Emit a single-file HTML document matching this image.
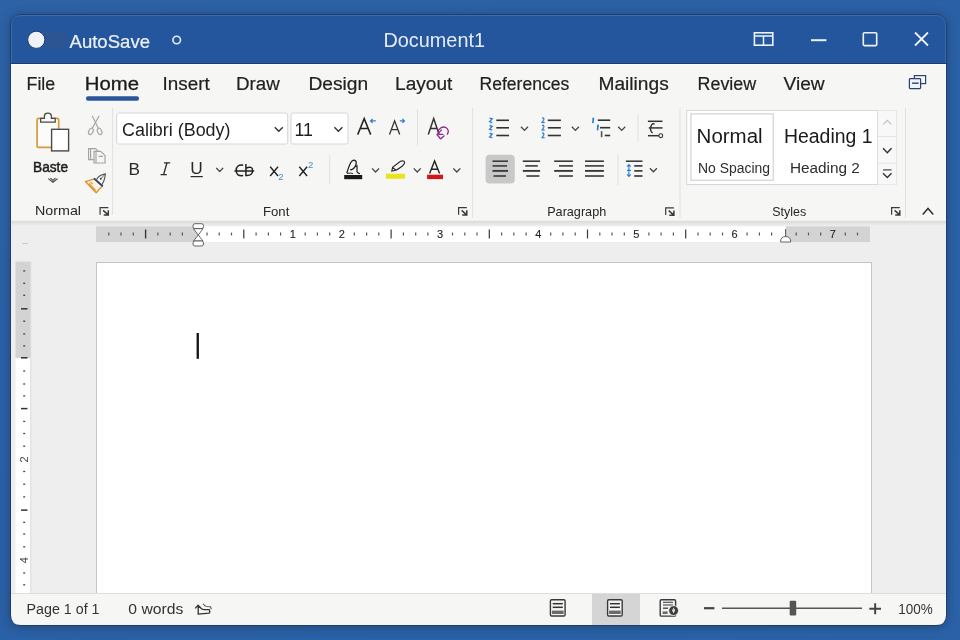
<!DOCTYPE html>
<html><head><meta charset="utf-8"><title>Document1 - Word</title>
<style>html,body{margin:0;padding:0;width:960px;height:640px;overflow:hidden;background:#2b62a6}svg{display:block;will-change:transform}text{font-family:'Liberation Sans', sans-serif}</style>
</head><body>
<svg width="960" height="640" viewBox="0 0 960 640" font-family="'Liberation Sans', sans-serif">
<defs><linearGradient id="bg" x1="0" y1="0" x2="1" y2="1"><stop offset="0" stop-color="#2d62a6"/><stop offset="0.5" stop-color="#2a60a5"/><stop offset="1" stop-color="#2b62a7"/></linearGradient><clipPath id="win"><rect x="11" y="15" width="935" height="610" rx="10"/></clipPath><filter id="sh" x="-5%" y="-5%" width="110%" height="110%"><feGaussianBlur stdDeviation="4"/></filter></defs>
<rect x="0" y="0" width="960" height="640" fill="url(#bg)"/>
<rect x="9" y="14" width="939" height="614" fill="#1b355c" rx="12" opacity="0.5" filter="url(#sh)"/>
<g clip-path="url(#win)">
<rect x="11" y="15" width="935" height="49" fill="#23569c"/>
<rect x="11" y="63.5" width="935" height="158" fill="#f6f6f4"/>
<line x1="11" y1="63.5" x2="946" y2="63.5" stroke="#1c3d72" stroke-width="1"/>
<line x1="11" y1="64.5" x2="946" y2="64.5" stroke="#fbfbfb" stroke-width="1"/>
<rect x="11" y="221" width="935" height="372" fill="#eeeeee"/>
<linearGradient id="rsh" x1="0" y1="0" x2="0" y2="1"><stop offset="0" stop-color="#dadada"/><stop offset="1" stop-color="#eeeeee"/></linearGradient>
<rect x="11" y="220.8" width="935" height="5" fill="url(#rsh)"/>
</g>
<rect x="10.5" y="14.5" width="936" height="611" rx="10.5" fill="none" stroke="#1d3660" stroke-width="1" opacity="0.7"/>
<path d="M11.5,63 V25 Q11.5,15.5 21,15.5 H936 Q945.5,15.5 945.5,25 V63" fill="none" stroke="#4a7cbc" stroke-width="1" opacity="0.6"/>
<rect x="38" y="31.5" width="30" height="16" fill="#34568c" rx="8" opacity="0.55"/>
<circle cx="36.3" cy="39.8" r="8.6" fill="#eef1f6" stroke="#1a3a6c" stroke-width="1"/>
<text x="69.5" y="48.3" font-size="19" fill="#eef2f8" textLength="80.5" lengthAdjust="spacingAndGlyphs" stroke="#eef2f8" stroke-width="0.2">AutoSave</text>
<circle cx="176.7" cy="40" r="3.8" fill="none" stroke="#e8eef6" stroke-width="1.6"/>
<text x="383.5" y="47" font-size="19.5" fill="#e6ecf5" textLength="101.5" lengthAdjust="spacingAndGlyphs">Document1</text>
<rect x="754.4" y="32.8" width="18.4" height="12.4" fill="none" stroke="#eef2f8" stroke-width="1.6"/>
<line x1="754.4" y1="36" x2="772.8" y2="36" stroke="#eef2f8" stroke-width="1.5"/>
<line x1="763.5" y1="36" x2="763.5" y2="45.2" stroke="#eef2f8" stroke-width="1.5"/>
<line x1="811" y1="40.2" x2="826.4" y2="40.2" stroke="#eef2f8" stroke-width="2"/>
<rect x="863.3" y="32.8" width="13.4" height="12.8" fill="none" stroke="#eef2f8" stroke-width="1.6" rx="1"/>
<path d="M915,32.5 L928,45.5 M928,32.5 L915,45.5" stroke="#eef2f8" stroke-width="1.8"/>
<text x="26.5" y="89.5" font-size="18.8" fill="#222" textLength="28.7" lengthAdjust="spacingAndGlyphs" stroke="#222" stroke-width="0.2">File</text>
<text x="84.8" y="89.5" font-size="18.8" fill="#1a1a1a" textLength="54.2" lengthAdjust="spacingAndGlyphs" stroke="#1a1a1a" stroke-width="0.3">Home</text>
<text x="162.5" y="89.5" font-size="18.8" fill="#222" textLength="47.2" lengthAdjust="spacingAndGlyphs" stroke="#222" stroke-width="0.2">Insert</text>
<text x="236.1" y="89.5" font-size="18.8" fill="#222" textLength="43.7" lengthAdjust="spacingAndGlyphs" stroke="#222" stroke-width="0.2">Draw</text>
<text x="308.5" y="89.5" font-size="18.8" fill="#222" textLength="59.7" lengthAdjust="spacingAndGlyphs" stroke="#222" stroke-width="0.2">Design</text>
<text x="395.1" y="89.5" font-size="18.8" fill="#222" textLength="57.2" lengthAdjust="spacingAndGlyphs" stroke="#222" stroke-width="0.2">Layout</text>
<text x="479.5" y="89.5" font-size="18.8" fill="#222" textLength="89.8" lengthAdjust="spacingAndGlyphs" stroke="#222" stroke-width="0.2">References</text>
<text x="598.5" y="89.5" font-size="18.8" fill="#222" textLength="70.2" lengthAdjust="spacingAndGlyphs" stroke="#222" stroke-width="0.2">Mailings</text>
<text x="697.5" y="89.5" font-size="18.8" fill="#222" textLength="58.7" lengthAdjust="spacingAndGlyphs" stroke="#222" stroke-width="0.2">Review</text>
<text x="783.5" y="89.5" font-size="18.8" fill="#222" textLength="41.2" lengthAdjust="spacingAndGlyphs" stroke="#222" stroke-width="0.2">View</text>
<rect x="86" y="96.2" width="53" height="4.6" fill="#2b579a" rx="2"/>
<rect x="914.4" y="75.6" width="11.2" height="8" fill="#f5f7fb" stroke="#2c426e" stroke-width="1.2"/>
<rect x="909.4" y="78.6" width="11.2" height="10" rx="0.8" fill="#eef2f9" stroke="#2c426e" stroke-width="1.2"/>
<line x1="912.1" y1="83.2" x2="918.7" y2="83.2" stroke="#2c426e" stroke-width="1.4"/>
<rect x="37.1" y="118.4" width="21.6" height="29" fill="#fbfbfa" stroke="#d59a3c" stroke-width="1.7" rx="1.5"/>
<path d="M40.6,122.2 V118.4 H44.4 V116 Q44.6,113.2 47.8,113.2 Q51.2,113.2 51.4,116 V118.4 H55.2 V122.2 Z" fill="#f8f8f8" stroke="#4a4a4a" stroke-width="1.3"/>
<rect x="51.6" y="129.3" width="17" height="21.6" fill="#ffffff" stroke="#4a4a4a" stroke-width="1.4"/>
<text x="33" y="172" font-size="14.6" fill="#1e1e1e" textLength="35" lengthAdjust="spacingAndGlyphs" stroke="#1e1e1e" stroke-width="0.5">Baste</text>
<path d="M48.3,178.6 L53,182.2 L57.6,178.6 M50.5,178.2 L53,180.3 L55.5,178.2" fill="none" stroke="#444" stroke-width="1.1"/>
<g fill="none" stroke="#a6a6a6" stroke-width="1.15"><ellipse cx="90.9" cy="131.4" rx="2.1" ry="3.3" transform="rotate(25 90.9 131.4)"/><ellipse cx="99.6" cy="131.4" rx="2.1" ry="3.3" transform="rotate(-25 99.6 131.4)"/><path d="M92.2,128.4 L99.2,115.8 M98.4,128.4 L92.2,115.8"/></g>
<g fill="#f6f6f4" stroke="#a3a3a3" stroke-width="1.15"><path d="M88.6,148.6 H95.4 L99.4,152.2 V159.6 H88.6 Z"/><path d="M90.6,149 V159.4"/><path d="M94,151.4 H100.6 L105,155.4 V163 H94 Z"/><path d="M96,151.8 V162.8 M98.6,156.3 H103"/></g>
<path d="M94.2,178.8 Q89.5,180.6 85.4,181.6 L96.2,192.8 Q98.8,189.2 102.4,186.2 Z" fill="#fdf2e0" stroke="#e0902a" stroke-width="1.4" stroke-linejoin="round"/>
<path d="M88.9,183.4 L95.7,190.3 M90.6,182.2 L92.6,184.1" fill="none" stroke="#e0902a" stroke-width="1.1"/>
<path d="M96.6,179.6 Q98.2,175.2 105.4,173.9 Q104.6,181.2 101.6,185" fill="#f6f6f4" stroke="#555" stroke-width="1.1"/>
<path d="M105.2,174.1 L100.9,178.7" stroke="#555" stroke-width="0.9"/>
<circle cx="100.8" cy="178.8" r="1" fill="#444"/>
<path d="M94,178.4 L102.8,186.2" stroke="#2a4878" stroke-width="1.9"/>
<text x="35" y="215.4" font-size="13.6" fill="#262626" textLength="46" lengthAdjust="spacingAndGlyphs">Normal</text>
<path d="M100.1,214.8 V207.6 H108.3" fill="none" stroke="#3a3a3a" stroke-width="1.2"/>
<path d="M103.1,210.4 L107.7,214.4 M108.3,210.2 V215 H103.7" fill="none" stroke="#3a3a3a" stroke-width="1.5"/>
<line x1="112.5" y1="108" x2="112.5" y2="215" stroke="#e2e2e2" stroke-width="1"/>
<rect x="116.7" y="113" width="171" height="31" fill="#ffffff" stroke="#d6d6d6" stroke-width="1" rx="2"/>
<text x="122" y="136" font-size="18" fill="#1e1e1e" textLength="108.5" lengthAdjust="spacingAndGlyphs">Calibri (Body)</text>
<path d="M274.8,127.30000000000001 L278.8,131.3 L282.8,127.30000000000001" fill="none" stroke="#333" stroke-width="1.4"/>
<rect x="291" y="113" width="57" height="31" fill="#ffffff" stroke="#d6d6d6" stroke-width="1" rx="2"/>
<text x="294.5" y="135.7" font-size="18" fill="#1e1e1e" textLength="18.5" lengthAdjust="spacingAndGlyphs">11</text>
<path d="M334.4,127.30000000000001 L338.4,131.3 L342.4,127.30000000000001" fill="none" stroke="#333" stroke-width="1.4"/>
<path d="M357.7,134.6 L364.2,118.6 L370.7,134.6 M360.1,128.4 H368.3" fill="none" stroke="#222" stroke-width="1.5"/>
<path d="M375.8,120.9 H370.6 M372.6,118.9 L370.6,120.9 L372.6,122.9" fill="none" stroke="#2e7bd6" stroke-width="1.3"/>
<path d="M389.5,134.6 L394.6,120.8 L399.7,134.6 M391.4,129.6 H397.8" fill="none" stroke="#333" stroke-width="1.3"/>
<path d="M399.9,120.9 H404.4 M402.4,118.9 L404.4,120.9 L402.4,122.9" fill="none" stroke="#2e7bd6" stroke-width="1.3"/>
<line x1="417.5" y1="109" x2="417.5" y2="145.5" stroke="#e0e0e0" stroke-width="1"/>
<path d="M428.3,134.6 L433.7,118.6 L439.1,134.6 M430.6,128.4 H436.8" fill="none" stroke="#333" stroke-width="1.5"/>
<path d="M437.5,131 L441,127.8 Q444.5,125.8 447.2,128.6 Q449.5,131.5 447,134.6" fill="none" stroke="#8e2a8e" stroke-width="1.3"/>
<path d="M441.8,129.6 L437,134.5 L440.6,139 M438.8,134.4 H443.3 M440.6,139 L444.5,135.5" fill="none" stroke="#8e2a8e" stroke-width="1.3"/>
<text x="128.5" y="174.8" font-size="17" fill="#2a2a2a" textLength="11.5" lengthAdjust="spacingAndGlyphs">B</text>
<path d="M167,162.8 L163.6,174.6 M164,162.8 H170.2 M160.6,174.6 H166.8" fill="none" stroke="#2a2a2a" stroke-width="1.3"/>
<text x="190.3" y="174.3" font-size="17" fill="#2a2a2a" textLength="12.5" lengthAdjust="spacingAndGlyphs">U</text>
<line x1="190.6" y1="176.6" x2="202.8" y2="176.6" stroke="#2a2a2a" stroke-width="1.2"/>
<path d="M216.2,167.89999999999998 L219.7,171.5 L223.2,167.89999999999998" fill="none" stroke="#444" stroke-width="1.3"/>
<path d="M243.2,165.2 Q236.3,164.2 236.2,170.4 Q236.3,176.6 243.2,175.6 M245.9,164 V176.2 M245.9,168.2 Q252.6,165.4 252.6,170.6 Q252.6,176 245.9,175.4 M234.4,171 H254.2" fill="none" stroke="#222" stroke-width="1.5"/>
<path d="M270.2,166.8 L278,176 M278,166.8 L270.2,176" fill="none" stroke="#222" stroke-width="1.4"/>
<text x="278.3" y="179.6" font-size="9.5" fill="#4a8ac8">2</text>
<path d="M299.3,166.8 L307.1,176 M307.1,166.8 L299.3,176" fill="none" stroke="#222" stroke-width="1.4"/>
<text x="308" y="167.8" font-size="9.5" fill="#4a8ac8">2</text>
<line x1="329.8" y1="154.5" x2="329.8" y2="184" stroke="#e0e0e0" stroke-width="1"/>
<path d="M346.8,173.2 Q348.5,167 350.5,163 Q353,158.8 355.8,161 Q357.2,163.5 354.5,167.5 Q352,170.5 350.2,169.5" fill="none" stroke="#222" stroke-width="1.3"/>
<path d="M355.5,166.8 L357,165.8 V171.8 Q357.6,173.4 360,173.6" fill="none" stroke="#222" stroke-width="1.2"/>
<path d="M347,173.4 Q351,172.6 353,173.6" fill="none" stroke="#222" stroke-width="1"/>
<rect x="344.2" y="175" width="18" height="4.2" fill="#1a1a1a"/>
<path d="M372.1,168.39999999999998 L375.6,172.0 L379.1,168.39999999999998" fill="none" stroke="#444" stroke-width="1.3"/>
<path d="M391.8,171 L392.6,167.4 L400.5,161.2 Q404.5,160 404.6,162.8 Q404.2,165.5 396,170.2 Z M392.6,167.4 L396,170.2" fill="none" stroke="#2a2a2a" stroke-width="1.15"/>
<rect x="386" y="173.7" width="19" height="5.1" fill="#ebe41c"/>
<path d="M413.7,168.39999999999998 L417.2,172.0 L420.7,168.39999999999998" fill="none" stroke="#444" stroke-width="1.3"/>
<path d="M429.6,173.6 L434.6,161 L439.6,173.6 M431.4,169.2 H437.8" fill="none" stroke="#222" stroke-width="1.4"/>
<rect x="427.1" y="174.7" width="15.9" height="4.4" fill="#d41616"/>
<path d="M453.3,168.39999999999998 L456.8,172.0 L460.3,168.39999999999998" fill="none" stroke="#444" stroke-width="1.3"/>
<text x="263" y="216" font-size="13.6" fill="#262626" textLength="26.3" lengthAdjust="spacingAndGlyphs">Font</text>
<path d="M458.6,214.8 V207.6 H466.8" fill="none" stroke="#3a3a3a" stroke-width="1.2"/>
<path d="M461.6,210.4 L466.2,214.4 M466.8,210.2 V215 H462.2" fill="none" stroke="#3a3a3a" stroke-width="1.5"/>
<line x1="472.5" y1="108" x2="472.5" y2="218" stroke="#e2e2e2" stroke-width="1"/>
<line x1="496.3" y1="120.3" x2="509" y2="120.3" stroke="#333" stroke-width="1.6"/>
<line x1="496.3" y1="127.8" x2="509" y2="127.8" stroke="#333" stroke-width="1.6"/>
<line x1="496.3" y1="135.5" x2="509" y2="135.5" stroke="#333" stroke-width="1.6"/>
<line x1="490.9" y1="117.8" x2="490.9" y2="138.5" stroke="#2c7cd2" stroke-width="0.8" opacity="0.35"/>
<path d="M489.5,118.1 L492.29999999999995,118.89999999999999 L489.5,121.7 L492.29999999999995,122.5" fill="none" stroke="#2c7cd2" stroke-width="1.2"/>
<path d="M489.5,125.6 L492.29999999999995,126.39999999999999 L489.5,129.2 L492.29999999999995,130.0" fill="none" stroke="#2c7cd2" stroke-width="1.2"/>
<path d="M489.5,133.3 L492.29999999999995,134.1 L489.5,136.9 L492.29999999999995,137.7" fill="none" stroke="#2c7cd2" stroke-width="1.2"/>
<path d="M521.0,126.8 L524.5,130.4 L528.0,126.8" fill="none" stroke="#444" stroke-width="1.3"/>
<line x1="547.8" y1="120.3" x2="560.9" y2="120.3" stroke="#333" stroke-width="1.6"/>
<line x1="547.8" y1="127.8" x2="560.9" y2="127.8" stroke="#333" stroke-width="1.6"/>
<line x1="547.8" y1="135.5" x2="560.9" y2="135.5" stroke="#333" stroke-width="1.6"/>
<line x1="543.2" y1="117.8" x2="543.2" y2="138.5" stroke="#2c7cd2" stroke-width="0.8" opacity="0.35"/>
<path d="M542.0,117.89999999999999 Q544.8000000000001,117.7 543.6,120.3 L542.0,122.5 H544.8000000000001" fill="none" stroke="#2c7cd2" stroke-width="1.1"/>
<path d="M542.0,125.39999999999999 Q544.8000000000001,125.2 543.6,127.8 L542.0,130.0 H544.8000000000001" fill="none" stroke="#2c7cd2" stroke-width="1.1"/>
<path d="M542.0,133.1 Q544.8000000000001,132.9 543.6,135.5 L542.0,137.7 H544.8000000000001" fill="none" stroke="#2c7cd2" stroke-width="1.1"/>
<path d="M571.9,126.8 L575.4,130.4 L578.9,126.8" fill="none" stroke="#444" stroke-width="1.3"/>
<path d="M592.3,118.6 H594.2 M593.4,118.6 L592.8,123.2" stroke="#2c7cd2" stroke-width="1.6" fill="none"/>
<path d="M597,125.6 H598.9 M598.1,125.6 L597.5,130.4" stroke="#2c7cd2" stroke-width="1.6" fill="none"/>
<line x1="597.8" y1="120.2" x2="610.2" y2="120.2" stroke="#333" stroke-width="1.6"/>
<line x1="600" y1="127.7" x2="610.2" y2="127.7" stroke="#333" stroke-width="1.6"/>
<line x1="601.6" y1="131.2" x2="601.6" y2="137.2" stroke="#555" stroke-width="1.6"/>
<line x1="604.8" y1="135.5" x2="610.2" y2="135.5" stroke="#333" stroke-width="1.6"/>
<path d="M618.2,126.8 L621.7,130.4 L625.2,126.8" fill="none" stroke="#444" stroke-width="1.3"/>
<line x1="638" y1="114" x2="638" y2="141.7" stroke="#e0e0e0" stroke-width="1"/>
<line x1="647.9" y1="121.3" x2="662.5" y2="121.3" stroke="#333" stroke-width="1.5"/>
<line x1="648.8" y1="127.9" x2="662.5" y2="127.9" stroke="#555" stroke-width="1.8"/>
<path d="M654.6,124.2 Q653,123 651.6,124.8 Q649.6,128 651,131.2 Q651.6,132.6 652.8,132.8" fill="none" stroke="#333" stroke-width="1.3"/>
<line x1="648" y1="135.7" x2="659" y2="135.7" stroke="#333" stroke-width="1.5"/>
<circle cx="660.8" cy="135.7" r="1.9" fill="#fbfbfb" stroke="#333" stroke-width="1.1"/>
<rect x="485.6" y="154.7" width="29.1" height="28.9" fill="#c8c8c8" rx="4"/>
<line x1="492.5" y1="161.2" x2="508" y2="161.2" stroke="#3a3a3a" stroke-width="1.6"/>
<line x1="492.5" y1="165.9" x2="507" y2="165.9" stroke="#3a3a3a" stroke-width="1.6"/>
<line x1="492.5" y1="170.9" x2="508" y2="170.9" stroke="#3a3a3a" stroke-width="1.9"/>
<line x1="493.5" y1="176" x2="506" y2="176" stroke="#3a3a3a" stroke-width="1.6"/>
<line x1="522.8" y1="161.2" x2="540.1" y2="161.2" stroke="#3a3a3a" stroke-width="1.6"/>
<line x1="525.3" y1="165.9" x2="537.8" y2="165.9" stroke="#3a3a3a" stroke-width="1.6"/>
<line x1="522.8" y1="170.9" x2="540.1" y2="170.9" stroke="#3a3a3a" stroke-width="1.9"/>
<line x1="526.3" y1="176" x2="539.4" y2="176" stroke="#3a3a3a" stroke-width="1.6"/>
<line x1="554.2" y1="161.2" x2="572.9" y2="161.2" stroke="#3a3a3a" stroke-width="1.6"/>
<line x1="559" y1="165.9" x2="572.9" y2="165.9" stroke="#3a3a3a" stroke-width="1.6"/>
<line x1="554.2" y1="170.9" x2="572.9" y2="170.9" stroke="#3a3a3a" stroke-width="1.9"/>
<line x1="559" y1="176" x2="572.9" y2="176" stroke="#3a3a3a" stroke-width="1.6"/>
<line x1="585" y1="161.2" x2="603.9" y2="161.2" stroke="#3a3a3a" stroke-width="1.6"/>
<line x1="585" y1="165.9" x2="603.9" y2="165.9" stroke="#3a3a3a" stroke-width="1.6"/>
<line x1="585" y1="170.9" x2="603.9" y2="170.9" stroke="#3a3a3a" stroke-width="1.9"/>
<line x1="585" y1="176" x2="603.9" y2="176" stroke="#3a3a3a" stroke-width="1.6"/>
<line x1="618" y1="154" x2="618" y2="185" stroke="#e0e0e0" stroke-width="1"/>
<line x1="625.9" y1="161.2" x2="642.5" y2="161.2" stroke="#333" stroke-width="1.5"/>
<line x1="634.2" y1="165.9" x2="642.5" y2="165.9" stroke="#333" stroke-width="1.6"/>
<line x1="634.2" y1="170.9" x2="642.5" y2="170.9" stroke="#333" stroke-width="1.6"/>
<line x1="634.2" y1="176" x2="642.5" y2="176" stroke="#333" stroke-width="1.6"/>
<path d="M628.9,164.6 V176.4 M627,166.6 L628.9,164.6 L630.8,166.6 M627,174.4 L628.9,176.4 L630.8,174.4 M627,170.4 H631" fill="none" stroke="#2c7cd2" stroke-width="1.1"/>
<path d="M649.9,168.2 L653.4,171.8 L656.9,168.2" fill="none" stroke="#444" stroke-width="1.3"/>
<text x="547.2" y="216" font-size="13.6" fill="#262626" textLength="59" lengthAdjust="spacingAndGlyphs">Paragraph</text>
<path d="M665.7,215.0 V207.79999999999998 H673.9" fill="none" stroke="#3a3a3a" stroke-width="1.2"/>
<path d="M668.7,210.6 L673.3000000000001,214.6 M673.9,210.39999999999998 V215.2 H669.3000000000001" fill="none" stroke="#3a3a3a" stroke-width="1.5"/>
<line x1="680" y1="108" x2="680" y2="218" stroke="#e2e2e2" stroke-width="1"/>
<rect x="686.7" y="110.5" width="209.5" height="74" fill="#ffffff" stroke="#d8d8d8" stroke-width="1"/>
<rect x="690.9" y="113.9" width="82.3" height="66.3" fill="#ffffff" stroke="#c9c9c9" stroke-width="1"/>
<rect x="877.5" y="110.5" width="18.7" height="74" fill="#f8f8f8"/>
<line x1="877.5" y1="110.5" x2="877.5" y2="184.5" stroke="#dedede" stroke-width="1"/>
<line x1="877.5" y1="136.5" x2="896.2" y2="136.5" stroke="#e4e4e4" stroke-width="1"/>
<line x1="877.5" y1="163.2" x2="896.2" y2="163.2" stroke="#e4e4e4" stroke-width="1"/>
<path d="M883.3,124.4 L887.3,120.4 L891.3,124.4" fill="none" stroke="#c0c0c0" stroke-width="1.2"/>
<path d="M883.05,148.3 L887.3,152.7 L891.55,148.3" fill="none" stroke="#333" stroke-width="1.5"/>
<line x1="883" y1="169.9" x2="891.5" y2="169.9" stroke="#444" stroke-width="1.2"/>
<path d="M883.05,173.20000000000002 L887.3,177.6 L891.55,173.20000000000002" fill="none" stroke="#333" stroke-width="1.4"/>
<text x="696.6" y="143" font-size="19.5" fill="#1a1a1a" textLength="66" lengthAdjust="spacingAndGlyphs">Normal</text>
<text x="784" y="143" font-size="19.5" fill="#1a1a1a" textLength="88.5" lengthAdjust="spacingAndGlyphs">Heading 1</text>
<text x="698" y="173" font-size="15.5" fill="#2e2e2e" textLength="72" lengthAdjust="spacingAndGlyphs">No Spacing</text>
<text x="789.9" y="173" font-size="15.5" fill="#2e2e2e" textLength="70" lengthAdjust="spacingAndGlyphs">Heading 2</text>
<text x="772.2" y="215.8" font-size="13.6" fill="#262626" textLength="34" lengthAdjust="spacingAndGlyphs">Styles</text>
<path d="M891.6,214.8 V207.6 H899.8" fill="none" stroke="#3a3a3a" stroke-width="1.2"/>
<path d="M894.6,210.4 L899.2,214.4 M899.8,210.2 V215 H895.2" fill="none" stroke="#3a3a3a" stroke-width="1.5"/>
<line x1="905.5" y1="108" x2="905.5" y2="218" stroke="#e2e2e2" stroke-width="1"/>
<path d="M922.75,214.5 L928,208.5 L933.25,214.5" fill="none" stroke="#333" stroke-width="1.5"/>
<rect x="96" y="226.4" width="102" height="15.6" fill="#d3d3d3"/>
<rect x="198" y="226.4" width="588" height="15.6" fill="#ffffff"/>
<rect x="786" y="226.4" width="84" height="15.6" fill="#d3d3d3"/>
<line x1="108.8" y1="232.6" x2="108.8" y2="235.4" stroke="#555" stroke-width="1.2"/>
<line x1="121.0" y1="232.6" x2="121.0" y2="235.4" stroke="#555" stroke-width="1.2"/>
<line x1="133.3" y1="232.6" x2="133.3" y2="235.4" stroke="#555" stroke-width="1.2"/>
<line x1="145.6" y1="229.5" x2="145.6" y2="238.5" stroke="#3a3a3a" stroke-width="1.4"/>
<line x1="157.9" y1="232.6" x2="157.9" y2="235.4" stroke="#555" stroke-width="1.2"/>
<line x1="170.2" y1="232.6" x2="170.2" y2="235.4" stroke="#555" stroke-width="1.2"/>
<line x1="182.4" y1="232.6" x2="182.4" y2="235.4" stroke="#555" stroke-width="1.2"/>
<line x1="207.0" y1="232.6" x2="207.0" y2="235.4" stroke="#555" stroke-width="1.2"/>
<line x1="219.2" y1="232.6" x2="219.2" y2="235.4" stroke="#555" stroke-width="1.2"/>
<line x1="231.5" y1="232.6" x2="231.5" y2="235.4" stroke="#555" stroke-width="1.2"/>
<line x1="243.8" y1="229.5" x2="243.8" y2="238.5" stroke="#3a3a3a" stroke-width="1.2"/>
<line x1="256.1" y1="232.6" x2="256.1" y2="235.4" stroke="#555" stroke-width="1.2"/>
<line x1="268.4" y1="232.6" x2="268.4" y2="235.4" stroke="#555" stroke-width="1.2"/>
<line x1="280.6" y1="232.6" x2="280.6" y2="235.4" stroke="#555" stroke-width="1.2"/>
<text x="292.7" y="238.3" font-size="11" fill="#222" text-anchor="middle" stroke="#222" stroke-width="0.1">1</text>
<line x1="305.2" y1="232.6" x2="305.2" y2="235.4" stroke="#555" stroke-width="1.2"/>
<line x1="317.4" y1="232.6" x2="317.4" y2="235.4" stroke="#555" stroke-width="1.2"/>
<line x1="329.7" y1="232.6" x2="329.7" y2="235.4" stroke="#555" stroke-width="1.2"/>
<text x="341.8" y="238.3" font-size="11" fill="#222" text-anchor="middle" stroke="#222" stroke-width="0.1">2</text>
<line x1="354.3" y1="232.6" x2="354.3" y2="235.4" stroke="#555" stroke-width="1.2"/>
<line x1="366.6" y1="232.6" x2="366.6" y2="235.4" stroke="#555" stroke-width="1.2"/>
<line x1="378.8" y1="232.6" x2="378.8" y2="235.4" stroke="#555" stroke-width="1.2"/>
<line x1="391.1" y1="229.5" x2="391.1" y2="238.5" stroke="#3a3a3a" stroke-width="1.2"/>
<line x1="403.4" y1="232.6" x2="403.4" y2="235.4" stroke="#555" stroke-width="1.2"/>
<line x1="415.7" y1="232.6" x2="415.7" y2="235.4" stroke="#555" stroke-width="1.2"/>
<line x1="427.9" y1="232.6" x2="427.9" y2="235.4" stroke="#555" stroke-width="1.2"/>
<text x="440.0" y="238.3" font-size="11" fill="#222" text-anchor="middle" stroke="#222" stroke-width="0.1">3</text>
<line x1="452.5" y1="232.6" x2="452.5" y2="235.4" stroke="#555" stroke-width="1.2"/>
<line x1="464.8" y1="232.6" x2="464.8" y2="235.4" stroke="#555" stroke-width="1.2"/>
<line x1="477.0" y1="232.6" x2="477.0" y2="235.4" stroke="#555" stroke-width="1.2"/>
<line x1="489.3" y1="229.5" x2="489.3" y2="238.5" stroke="#3a3a3a" stroke-width="1.2"/>
<line x1="501.6" y1="232.6" x2="501.6" y2="235.4" stroke="#555" stroke-width="1.2"/>
<line x1="513.8" y1="232.6" x2="513.8" y2="235.4" stroke="#555" stroke-width="1.2"/>
<line x1="526.1" y1="232.6" x2="526.1" y2="235.4" stroke="#555" stroke-width="1.2"/>
<text x="538.1999999999999" y="238.3" font-size="11" fill="#222" text-anchor="middle" stroke="#222" stroke-width="0.1">4</text>
<line x1="550.7" y1="232.6" x2="550.7" y2="235.4" stroke="#555" stroke-width="1.2"/>
<line x1="562.9" y1="232.6" x2="562.9" y2="235.4" stroke="#555" stroke-width="1.2"/>
<line x1="575.2" y1="232.6" x2="575.2" y2="235.4" stroke="#555" stroke-width="1.2"/>
<line x1="587.5" y1="229.5" x2="587.5" y2="238.5" stroke="#3a3a3a" stroke-width="1.2"/>
<line x1="599.8" y1="232.6" x2="599.8" y2="235.4" stroke="#555" stroke-width="1.2"/>
<line x1="612.0" y1="232.6" x2="612.0" y2="235.4" stroke="#555" stroke-width="1.2"/>
<line x1="624.3" y1="232.6" x2="624.3" y2="235.4" stroke="#555" stroke-width="1.2"/>
<text x="636.4" y="238.3" font-size="11" fill="#222" text-anchor="middle" stroke="#222" stroke-width="0.1">5</text>
<line x1="648.9" y1="232.6" x2="648.9" y2="235.4" stroke="#555" stroke-width="1.2"/>
<line x1="661.1" y1="232.6" x2="661.1" y2="235.4" stroke="#555" stroke-width="1.2"/>
<line x1="673.4" y1="232.6" x2="673.4" y2="235.4" stroke="#555" stroke-width="1.2"/>
<line x1="685.7" y1="229.5" x2="685.7" y2="238.5" stroke="#3a3a3a" stroke-width="1.2"/>
<line x1="698.0" y1="232.6" x2="698.0" y2="235.4" stroke="#555" stroke-width="1.2"/>
<line x1="710.2" y1="232.6" x2="710.2" y2="235.4" stroke="#555" stroke-width="1.2"/>
<line x1="722.5" y1="232.6" x2="722.5" y2="235.4" stroke="#555" stroke-width="1.2"/>
<text x="734.5999999999999" y="238.3" font-size="11" fill="#222" text-anchor="middle" stroke="#222" stroke-width="0.1">6</text>
<line x1="747.1" y1="232.6" x2="747.1" y2="235.4" stroke="#555" stroke-width="1.2"/>
<line x1="759.4" y1="232.6" x2="759.4" y2="235.4" stroke="#555" stroke-width="1.2"/>
<line x1="771.6" y1="232.6" x2="771.6" y2="235.4" stroke="#555" stroke-width="1.2"/>
<line x1="796.2" y1="232.6" x2="796.2" y2="235.4" stroke="#555" stroke-width="1.2"/>
<line x1="808.5" y1="232.6" x2="808.5" y2="235.4" stroke="#555" stroke-width="1.2"/>
<line x1="820.7" y1="232.6" x2="820.7" y2="235.4" stroke="#555" stroke-width="1.2"/>
<text x="832.8" y="238.3" font-size="11" fill="#222" text-anchor="middle" stroke="#222" stroke-width="0.1">7</text>
<line x1="845.3" y1="232.6" x2="845.3" y2="235.4" stroke="#555" stroke-width="1.2"/>
<line x1="857.5" y1="232.6" x2="857.5" y2="235.4" stroke="#555" stroke-width="1.2"/>
<rect x="193" y="223.7" width="10.5" height="5" rx="2" fill="#fff" stroke="#555" stroke-width="0.9"/>
<path d="M193.5,228.7 H203 L198.25,235 Z M198.25,235 L203,241 H193.5 Z" fill="#fff" stroke="#555" stroke-width="0.9"/>
<rect x="193" y="241" width="10.5" height="5" rx="2" fill="#fff" stroke="#555" stroke-width="0.9"/>
<path d="M780.5,242 Q780.5,236.5 785.6,236.5 Q790.7,236.5 790.7,242 Z" fill="#fff" stroke="#555" stroke-width="0.9"/>
<line x1="785.6" y1="229" x2="785.6" y2="236.5" stroke="#555" stroke-width="1"/>
<line x1="22" y1="243.5" x2="28" y2="243.5" stroke="#c8c8c8" stroke-width="1"/>
<rect x="15.5" y="261.6" width="15.1" height="96.6" fill="#d3d3d3"/>
<rect x="15.5" y="358.2" width="15.1" height="234.8" fill="#ffffff"/>
<line x1="30.8" y1="261.6" x2="30.8" y2="593" stroke="#dcdcdc" stroke-width="1"/>
<line x1="23.2" y1="270.9" x2="25.2" y2="270.9" stroke="#444" stroke-width="1.3"/>
<line x1="23.2" y1="283.3" x2="25.2" y2="283.3" stroke="#444" stroke-width="1.3"/>
<line x1="23.2" y1="295.3" x2="25.2" y2="295.3" stroke="#444" stroke-width="1.3"/>
<line x1="21" y1="308.8" x2="27.5" y2="308.8" stroke="#333" stroke-width="1.5"/>
<line x1="23.2" y1="321.2" x2="25.2" y2="321.2" stroke="#444" stroke-width="1.3"/>
<line x1="23.2" y1="333.9" x2="25.2" y2="333.9" stroke="#444" stroke-width="1.3"/>
<line x1="23.2" y1="345.9" x2="25.2" y2="345.9" stroke="#444" stroke-width="1.3"/>
<line x1="21" y1="357.8" x2="27.5" y2="357.8" stroke="#333" stroke-width="1.5"/>
<line x1="23.2" y1="371" x2="25.2" y2="371" stroke="#444" stroke-width="1.3"/>
<line x1="23.2" y1="384" x2="25.2" y2="384" stroke="#444" stroke-width="1.3"/>
<line x1="23.2" y1="395.9" x2="25.2" y2="395.9" stroke="#444" stroke-width="1.3"/>
<line x1="21" y1="408.6" x2="27.5" y2="408.6" stroke="#333" stroke-width="1.5"/>
<line x1="23.2" y1="421.4" x2="25.2" y2="421.4" stroke="#444" stroke-width="1.3"/>
<line x1="23.2" y1="433.5" x2="25.2" y2="433.5" stroke="#444" stroke-width="1.3"/>
<line x1="23.2" y1="446.2" x2="25.2" y2="446.2" stroke="#444" stroke-width="1.3"/>
<text x="0" y="0" font-size="11" fill="#444" text-anchor="middle" transform="translate(28,459.4) rotate(-90)">2</text>
<line x1="23.2" y1="471.5" x2="25.2" y2="471.5" stroke="#444" stroke-width="1.3"/>
<line x1="23.2" y1="484.2" x2="25.2" y2="484.2" stroke="#444" stroke-width="1.3"/>
<line x1="23.2" y1="496.9" x2="25.2" y2="496.9" stroke="#444" stroke-width="1.3"/>
<line x1="21" y1="510.1" x2="27.5" y2="510.1" stroke="#333" stroke-width="1.5"/>
<line x1="23.2" y1="522.3" x2="25.2" y2="522.3" stroke="#444" stroke-width="1.3"/>
<line x1="23.2" y1="534" x2="25.2" y2="534" stroke="#444" stroke-width="1.3"/>
<line x1="23.2" y1="546.8" x2="25.2" y2="546.8" stroke="#444" stroke-width="1.3"/>
<text x="0" y="0" font-size="11" fill="#444" text-anchor="middle" transform="translate(28,560.3) rotate(-90)">4</text>
<line x1="23.2" y1="573" x2="25.2" y2="573" stroke="#444" stroke-width="1.3"/>
<line x1="23.2" y1="584.8" x2="25.2" y2="584.8" stroke="#444" stroke-width="1.3"/>
<rect x="96.5" y="262.5" width="775" height="340" fill="#ffffff" stroke="#c4c4c4" stroke-width="1"/>
<rect x="196.6" y="333" width="2.3" height="25.8" fill="#111"/>
<path d="M11,593 H946 V615 Q946,625 936,625 H21 Q11,625 11,615 Z" fill="#f6f6f5"/>
<line x1="11" y1="593.5" x2="946" y2="593.5" stroke="#dedede" stroke-width="1"/>
<text x="26.5" y="613.6" font-size="15.5" fill="#333" textLength="73" lengthAdjust="spacingAndGlyphs">Page 1 of 1</text>
<text x="128.3" y="613.6" font-size="15.5" fill="#333" textLength="55" lengthAdjust="spacingAndGlyphs">0 words</text>
<path d="M195.2,608.4 L198.1,605.2 L201.5,608.8 Q203,609.8 205,609.6 L209.2,609.6 Q210.4,611.8 209.2,613.2 L198.2,614.2 V605.6" fill="none" stroke="#333" stroke-width="1.3" stroke-linejoin="round"/>
<path d="M203.2,603.8 Q204.5,606.2 206.5,606.5 L210.5,606.8 L211.4,609.2" fill="none" stroke="#555" stroke-width="1.1"/>
<rect x="592" y="594" width="48" height="31" fill="#d5d5d5"/>
<rect x="550.4000000000001" y="599.7" width="14.700000000000001" height="16.3" rx="1.2" fill="#f4f4f4" stroke="#3a3a3a" stroke-width="1.4"/>
<line x1="552.7" y1="603.7" x2="562.8000000000001" y2="603.7" stroke="#333" stroke-width="1.5"/>
<line x1="552.7" y1="607.3" x2="562.8000000000001" y2="607.3" stroke="#333" stroke-width="1.5"/>
<rect x="551.9000000000001" y="610.6" width="11.700000000000001" height="3.4" fill="#6a6a6a"/>
<rect x="607.6" y="599.7" width="14.6" height="16.3" rx="1.2" fill="#f4f4f4" stroke="#3a3a3a" stroke-width="1.4"/>
<line x1="609.9" y1="603.7" x2="619.9" y2="603.7" stroke="#333" stroke-width="1.5"/>
<line x1="609.9" y1="607.3" x2="619.9" y2="607.3" stroke="#333" stroke-width="1.5"/>
<rect x="609.1" y="610.6" width="11.6" height="3.4" fill="#6a6a6a"/>
<rect x="660.2" y="599.7" width="15.4" height="16.4" rx="1.2" fill="#f4f4f4" stroke="#3a3a3a" stroke-width="1.4"/>
<line x1="663" y1="602.3" x2="673" y2="602.3" stroke="#444" stroke-width="1.1"/>
<line x1="663" y1="605" x2="673" y2="605" stroke="#444" stroke-width="1.1"/>
<line x1="663" y1="608.2" x2="668" y2="608.2" stroke="#444" stroke-width="1.4"/>
<rect x="662.6" y="611.4" width="5" height="2.6" fill="#6a6a6a"/>
<circle cx="673.6" cy="610.6" r="4.9" fill="#3c3c3c" stroke="#f6f6f5" stroke-width="0.8"/>
<path d="M673.6,607.6 L675.2,610.6 L673.6,613.6 L672,610.6 Z" fill="#dcdcdc"/>
<line x1="704" y1="608.2" x2="714.4" y2="608.2" stroke="#444" stroke-width="2.2"/>
<line x1="722" y1="608.2" x2="862" y2="608.2" stroke="#555" stroke-width="1.5"/>
<rect x="789.7" y="600.7" width="6.5" height="14.9" fill="#555" rx="1"/>
<path d="M869.3,608.7 H881 M875.15,603.2 V614.3" stroke="#444" stroke-width="2"/>
<text x="898.2" y="614" font-size="15" fill="#333" textLength="34.5" lengthAdjust="spacingAndGlyphs">100%</text>
</svg>
</body></html>
